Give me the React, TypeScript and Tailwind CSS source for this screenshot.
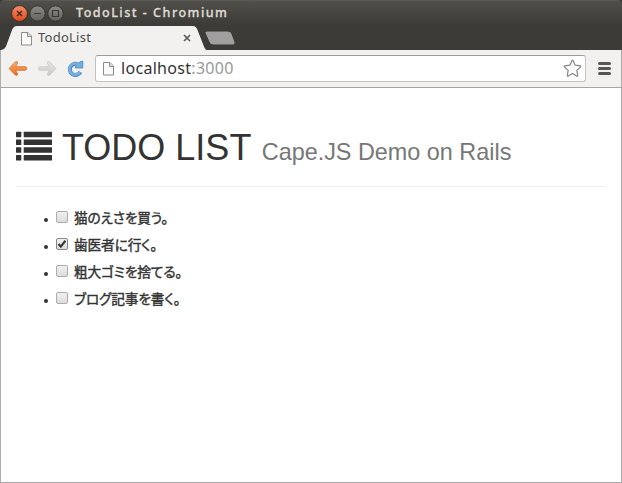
const tasks = [
  { text: "猫のえさを買う。", done: false },
  { text: "歯医者に行く。", done: true },
  { text: "粗大ゴミを捨てる。", done: false },
  { text: "ブログ記事を書く。", done: false },
];

function PageIcon({ className }: { className: string }) {
  return (
    <svg className={className} width="13" height="15" viewBox="0 0 13 15" fill="none">
      <path d="M1.5 1.5H8L11.5 5V14H1.5Z" fill="#fafafa" stroke="#8b8b8b" />
      <path d="M7.5 1.5V5.5H11.5" fill="#ddd" stroke="#8b8b8b" />
    </svg>
  );
}

function WindowButtons() {
  return (
    <svg className="ml-[11px] shrink-0" width="54" height="18" viewBox="0 0 54 18" fill="none">
      <defs>
        <linearGradient id="close" x2="0" y2="1">
          <stop stopColor="#f78d66" />
          <stop offset="1" stopColor="#df4a1b" />
        </linearGradient>
        <linearGradient id="button" x2="0" y2="1">
          <stop stopColor="#8c8a83" />
          <stop offset="1" stopColor="#65635d" />
        </linearGradient>
      </defs>
      <circle cx="8.5" cy="8.5" r="7.9" fill="url(#close)" stroke="#33312c" />
      <circle cx="26.5" cy="8.5" r="7.7" fill="url(#button)" stroke="#33312c" />
      <circle cx="44.5" cy="8.5" r="7.7" fill="url(#button)" stroke="#33312c" />
      <path d="m6 6 5 5m0-5-5 5" stroke="#4b2518" strokeWidth="1.4" />
      <path d="M23 8.5h7M41.5 5.5h6v6h-6z" stroke="#393832" strokeWidth="1.2" />
    </svg>
  );
}

function Arrow({ forward = false }: { forward?: boolean }) {
  return (
    <svg className={forward ? "ml-[9px] shrink-0 -scale-x-100" : "ml-[7px] shrink-0"} width="20" height="16" viewBox="0 0 20 16">
      <defs>
        <linearGradient id={forward ? "gray-arrow" : "orange-arrow"} x2="0" y2="1">
          <stop stopColor={forward ? "#e8e7e5" : "#ffb36b"} />
          <stop offset="1" stopColor={forward ? "#cccac7" : "#e66c21"} />
        </linearGradient>
      </defs>
      <path
        d="M1.2 7.5 7.2 1Q9.7-.4 9.7 2L7.5 5.7H17.2Q18.7 5.7 18.7 7.5t-1.5 1.8H7.5l2.2 3.5Q9.7 15.2 7.2 14Z"
        fill={forward ? "url(#gray-arrow)" : "url(#orange-arrow)"}
        stroke={forward ? "#c9c7c4" : "#d46a2c"}
        strokeWidth=".8"
        strokeLinejoin="round"
      />
    </svg>
  );
}

function Reload() {
  return (
    <svg className="ml-[9px] shrink-0" width="18" height="18" viewBox="0 0 18 18" fill="none">
      <path d="M13.2 5.2A5.6 5.6 0 1 0 14.4 12" stroke="#4f88c0" strokeWidth="4" />
      <path d="M16.8 1V8H9.4V5.9L12 4.5 14.2 1.6Z" fill="#73ace0" stroke="#4f88c0" strokeWidth=".8" strokeLinejoin="round" />
      <path d="M13.5 5.6A5.6 5.6 0 1 0 14 11.8" stroke="#77afe1" strokeWidth="2.6" />
    </svg>
  );
}

function ListIcon() {
  return (
    <svg className="shrink-0" width="36" height="30" viewBox="0 0 36 30" fill="#333">
      {[0.7, 8.5, 16.3, 24.1].map((y) => (
        <g key={y}>
          <rect y={y} width="5.3" height="5.5" rx=".6" />
          <rect x="7.7" y={y} width="28.3" height="5.5" rx=".6" />
        </g>
      ))}
    </svg>
  );
}

function Checkbox({ checked }: { checked: boolean }) {
  return (
    <span role="checkbox" aria-checked={checked} className={`flex h-3 w-3 shrink-0 items-center justify-center rounded-[2px] border bg-linear-to-b from-[#f0f0f0] to-[#dcdcdc] ${checked ? "border-[#888]" : "border-[#acacac]"}`}>
      {checked && (
        <svg className="shrink-0" width="10" height="10" viewBox="0 0 10 10" fill="none">
          <path d="m1.5 5 2.3 2.6L8.4 1.8" stroke="#383838" strokeWidth="2.2" />
        </svg>
      )}
    </span>
  );
}

export default function App() {
  return (
    <div className="flex h-[483px] w-[622px] flex-col overflow-hidden bg-[#3c3b37]">
      <header className="h-[50px] shrink-0 rounded-t-[5px] border-t border-[#5b5a55] bg-linear-to-b from-[#504f49] to-[#3c3b37] to-50%">
        <div className="flex h-[25px] items-center">
          <WindowButtons />
          <h2 className="-mt-[2px] ml-[11px] whitespace-pre font-['Noto_Sans',sans-serif] text-[12.5px] leading-4 font-medium tracking-[1.5px] text-[#dfdbd2] [-webkit-text-stroke:0.3px_#dfdbd2]">TodoList - Chromium</h2>
        </div>
        <div className="flex h-6 items-start">
          <div className="relative h-6 w-[207px] shrink-0">
            <svg className="absolute inset-0" width="207" height="24" viewBox="0 0 207 24">
              <path d="M1 24C6 23 6 20 8 15L12 4Q13.5 0 17 0H193Q196 0 197.5 4L203 18Q205 24 207 24Z" fill="#f2f1f0" />
            </svg>
            <div className="relative flex h-6 items-center pl-[20px]">
              <PageIcon className="shrink-0" />
              <span className="ml-[5px] font-['Noto_Sans',sans-serif] text-[13px] tracking-[0.25px] text-[#4c4c4c]">TodoList</span>
              <svg className="ml-auto mr-4" width="8" height="8" viewBox="0 0 8 8"><path d="m1 1 6 6m0-6-6 6" stroke="#5c5c5c" strokeWidth="1.7" /></svg>
            </div>
          </div>
          <svg className="mt-1 -ml-1 shrink-0" width="34" height="17" viewBox="0 0 34 17">
            <path d="M4 1H25Q28 1 29 4L32 12Q33 15 30 15H10Q7 15 6 12L2 3Q1 1 4 1Z" fill="#a09f9d" stroke="#373631" />
          </svg>
        </div>
      </header>

      <nav className="flex h-[38px] shrink-0 items-center border-x border-b border-l-[#b2aca8] border-r-[#aaa] border-b-[#a5a5a5] bg-[#f2f1f0]">
        <Arrow />
        <Arrow forward />
        <Reload />
        <div className="ml-[11px] flex h-[27px] w-[491px] items-center rounded-[3px] border border-[#c2c2c2] border-t-[#9b9b9b] bg-white px-[6px]">
          <PageIcon className="shrink-0" />
          <span className="-mt-px ml-[6px] font-['Noto_Sans',sans-serif] text-[16px] leading-5 tracking-[0.3px] text-[#333]">localhost<span className="text-[#999]">:3000</span></span>
          <svg className="ml-auto -mr-[3px]" width="19" height="19" viewBox="0 0 19 19">
            <path d="M9 1.5Q9.5.7 10 1.5L12.2 6.2 17.2 6.8Q18.3 7 17.5 7.9L13.8 11.4 14.7 16.5Q14.7 17.6 13.7 17.1L9.5 14.6 5.3 17.1Q4.3 17.6 4.3 16.5L5.2 11.4 1.5 7.9Q.7 7 1.8 6.8L6.8 6.2Z" fill="#fff" stroke="#858585" strokeWidth="1.2" strokeLinejoin="round" />
          </svg>
        </div>
        <div className="ml-3 flex w-[13px] flex-col gap-[2px]">
          <span className="h-[3px] rounded-sm bg-[#555]" />
          <span className="h-[3px] rounded-sm bg-[#555]" />
          <span className="h-[3px] rounded-sm bg-[#555]" />
        </div>
      </nav>

      <main className="flex-1 border-x border-b border-l-[#b2aca8] border-r-[#aaa] border-b-[#aaa] bg-white px-[15px] pt-[38px] text-[#333]">
        <div className="flex h-[61px] items-start border-b border-[#eee]">
          <div className="mt-[5px]"><ListIcon /></div>
          <h1 className="mt-[2px] ml-[10px] whitespace-nowrap font-['Liberation_Sans',Arial,sans-serif] text-[36px] leading-[40px] font-normal">
            TODO LIST <small className="ml-px text-[23.4px] text-[#777]">Cape.JS Demo on Rails</small>
          </h1>
        </div>
        <ul className="mt-4">
          {tasks.map((task) => (
            <li key={task.text} className="flex h-[27px] items-center pl-[28px]">
              <span className="mt-[6px] h-1 w-1 rounded-full bg-[#333]" />
              <span className="ml-2 flex"><Checkbox checked={task.done} /></span>
              <span className="mt-px ml-[6px] whitespace-nowrap font-['Noto_Sans_CJK_JP',sans-serif] text-[13.7px] leading-5 font-normal tracking-[-0.15px] [-webkit-text-stroke:0.4px_#333] [font-feature-settings:'palt']">{task.text}</span>
            </li>
          ))}
        </ul>
      </main>
    </div>
  );
}
